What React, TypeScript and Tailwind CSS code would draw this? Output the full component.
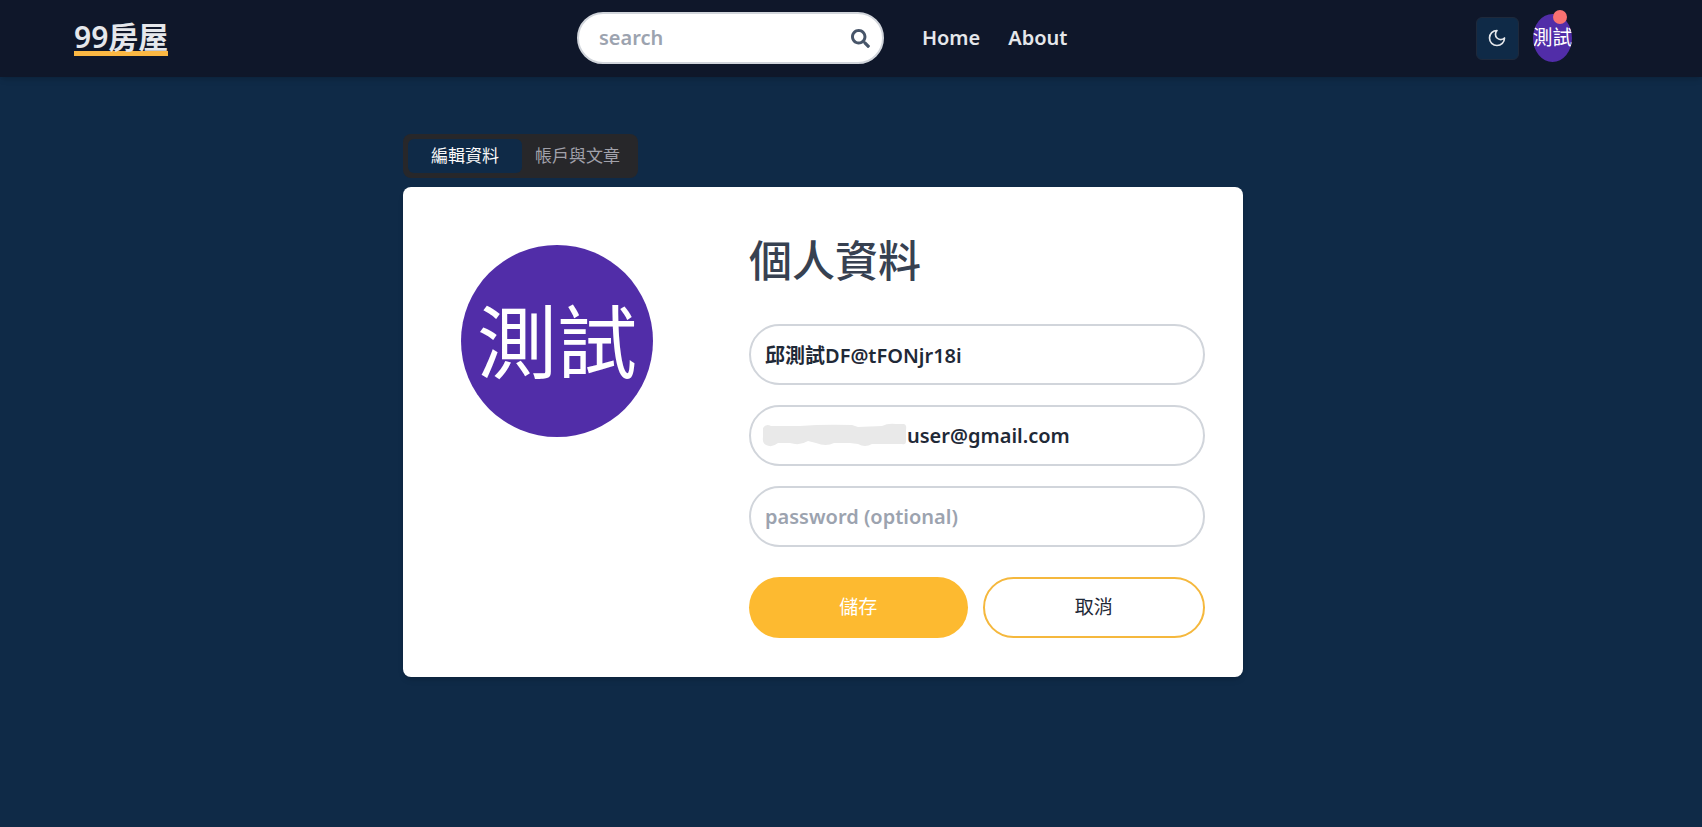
import React from "react";
import { FaSearch } from "react-icons/fa";

const field =
  "h-[61px] w-full rounded-full border-2 border-[#d1d5db] bg-white text-xl font-semibold text-[#1f2937] placeholder:text-[#9ca3af] outline-none";

function MoonIcon() {
  return (
    <svg
      width="20"
      height="20"
      viewBox="0 0 24 24"
      fill="none"
      stroke="currentColor"
      strokeWidth="2"
      strokeLinecap="round"
      strokeLinejoin="round"
      aria-hidden="true"
    >
      <path d="M12 3a6 6 0 0 0 9 9 9 9 0 1 1-9-9Z" />
    </svg>
  );
}

function Header() {
  return (
    <header className="bg-[#0f172a] pr-14 shadow-md">
      <div className="flex h-[77px] items-center justify-between px-[74px] pb-px">
        <a
          href="#"
          className="border-b-5 border-[#fbb843] pt-0.5 text-[30px] leading-[28px] font-semibold text-[#e5e7eb]"
        >
          99房屋
        </a>
        <div className="flex items-center gap-[38px]">
          <form className="flex h-[52px] w-[307px] items-center rounded-full border-2 border-[#d1d5db] bg-white pr-3 pl-5">
            <input
              type="text"
              aria-label="search"
              placeholder="search"
              className="min-w-0 flex-1 text-xl font-semibold text-[#1f2937] outline-none placeholder:text-[#9ca3af]"
            />
            <button type="button" aria-label="Submit search">
              <FaSearch size={19} className="text-[#475569]" />
            </button>
          </form>
          <nav className="flex gap-7 text-xl font-semibold text-[#e5e7eb]">
            <a href="#">Home</a>
            <a href="#">About</a>
          </nav>
        </div>
        <div className="flex items-center gap-[14px]">
          <button
            type="button"
            aria-label="Toggle theme"
            className="flex size-[43px] items-center justify-center rounded-md border border-[#1e293b] bg-[#0f2a47] text-[#e5e7eb]"
          >
            <MoonIcon />
          </button>
          <div className="relative">
            <button
              type="button"
              className="flex h-12 w-[39px] items-center justify-center overflow-hidden rounded-[50%] bg-[#512da8] text-xl whitespace-nowrap text-white"
            >
              測試
            </button>
            <span className="absolute -top-1 right-[5px] size-[14px] rounded-full bg-[#f87171]" />
          </div>
        </div>
      </div>
    </header>
  );
}

function Tabs() {
  return (
    <div role="tablist" className="flex h-[44px] w-fit rounded-lg bg-[#27272a] p-[5px] text-[17px]">
      <button
        type="button"
        role="tab"
        aria-selected="true"
        className="rounded-md bg-[#0f2a47] px-[23px] text-[#fafafa]"
      >
        編輯資料
      </button>
      <button type="button" role="tab" aria-selected="false" className="px-[13px] text-[#a1a1aa]">
        帳戶與文章
      </button>
    </div>
  );
}

function ProfileCard() {
  return (
    <section className="mt-[9px] flex items-start justify-between rounded-lg bg-white pt-12 pr-[38px] pb-[39px] pl-[58px] shadow-md">
      <div className="mt-[10px] flex size-48 items-center justify-center rounded-full bg-[#512da8] text-[80px] leading-none text-white">
        測試
      </div>
      <form className="w-[456px]">
        <h1 className="text-[43px] leading-[52px] font-medium text-[#374151]">個人資料</h1>
        <div className="mt-[37px] flex flex-col gap-5">
          <input
            aria-label="name"
            type="text"
            defaultValue="邱測試DF@tFONjr18i"
            className={`${field} px-[14px]`}
          />
          <div className="relative">
            <input
              aria-label="email"
              type="text"
              defaultValue="user@gmail.com"
              className={`${field} pr-[14px] pl-[156px]`}
            />
            <svg
              className="absolute top-[18px] left-[13px]"
              width="145"
              height="25"
              viewBox="0 0 145 25"
              fill="#e9e9e9"
              aria-hidden="true"
            >
              <path d="M1 5Q4 0 9 3L38 3Q62 1 90 2L96 4L120 3Q126 0 134 1L142 1Q145 2 144 7L144 18Q144 22 140 21L110 21Q103 25 96 21L88 20L72 20Q64 24 54 20L46 18Q38 23 28 20L16 20Q10 25 4 22Q0 20 1 14Z" />
            </svg>
          </div>
          <input
            aria-label="password"
            type="password"
            placeholder="password (optional)"
            className={`${field} px-[14px]`}
          />
        </div>
        <div className="mt-[30px] flex gap-[15px] text-[19px]">
          <button type="submit" className="h-[61px] flex-1 rounded-full bg-[#fdba30] text-white">
            儲存
          </button>
          <button
            type="button"
            className="h-[61px] flex-1 rounded-full border-2 border-[#f5b83d] bg-white text-[#1f2937]"
          >
            取消
          </button>
        </div>
      </form>
    </section>
  );
}

export default function App() {
  return (
    <div className="min-h-screen bg-[#0f2a47] font-['Noto_Sans','Noto_Sans_CJK_TC',sans-serif]">
      <Header />
      <main className="pt-[57px] pr-14">
        <div className="mx-auto max-w-[840px]">
          <Tabs />
          <ProfileCard />
        </div>
      </main>
    </div>
  );
}
